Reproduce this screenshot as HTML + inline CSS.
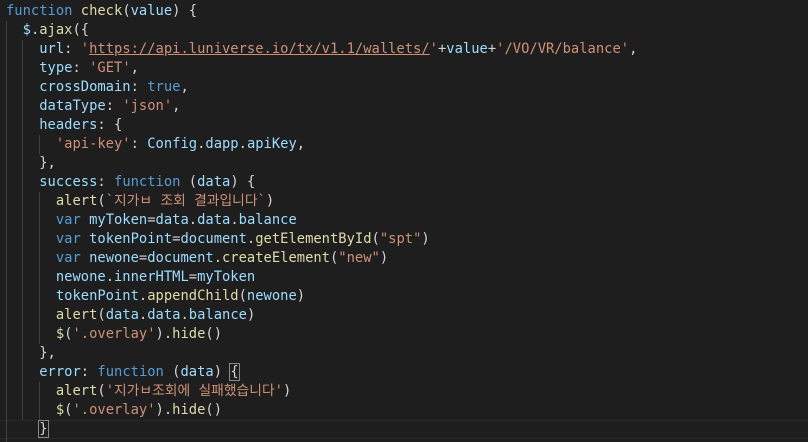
<!DOCTYPE html>
<html><head><meta charset="utf-8"><style>
body{margin:0;background:#1e1e1e;width:808px;height:440px;overflow:hidden}
pre{margin:0;position:absolute;left:6px;top:2px;font-family:"DejaVu Sans Mono","Noto Sans CJK KR",monospace;font-size:13.8px;line-height:19px;color:#d4d4d4}
.k{color:#569cd6}.f{color:#dcdcaa}.v{color:#9cdcfe}.s{color:#ce9178}.c{color:#4ec9b0}
.u{text-decoration:underline;text-decoration-color:#ce9178}
.g{position:absolute;width:1px;background:#404040}
.cur{position:absolute;left:0;top:420px;width:808px;height:19px;border-top:1px solid #282828;border-bottom:1px solid #282828;box-sizing:border-box}
.b{outline:1px solid #888;}
</style></head><body>
<div class="cur"></div>
<div class="g" style="left:6px;top:21px;height:421px"></div>
<div class="g" style="left:22px;top:40px;height:380px"></div>
<div class="g" style="left:39px;top:135px;height:19px"></div>
<div class="g" style="left:39px;top:192px;height:152px"></div>
<div class="g" style="left:39px;top:382px;height:38px"></div>
<pre><span class="k">function</span> <span class="f">check</span>(<span class="v">value</span>) {
  <span class="v">$</span>.<span class="f">ajax</span>({
    <span class="v">url</span>: <span class="s">'<span class="u">https://api.luniverse.io/tx/v1.1/wallets/</span>'</span>+<span class="v">value</span>+<span class="s">'/VO/VR/balance'</span>,
    <span class="v">type</span>: <span class="s">'GET'</span>,
    <span class="v">crossDomain</span>: <span class="k">true</span>,
    <span class="v">dataType</span>: <span class="s">'json'</span>,
    <span class="v">headers</span>: {
      <span class="s">'api-key'</span>: <span class="v">Config</span>.<span class="v">dapp</span>.<span class="v">apiKey</span>,
    },
    <span class="v">success</span>: <span class="k">function</span> (<span class="v">data</span>) {
      <span class="f">alert</span>(<span class="s">`지가ㅂ 조회 결과입니다`</span>)
      <span class="k">var</span> <span class="v">myToken</span>=<span class="v">data</span>.<span class="v">data</span>.<span class="v">balance</span>
      <span class="k">var</span> <span class="v">tokenPoint</span>=<span class="v">document</span>.<span class="f">getElementById</span>(<span class="s">"spt"</span>)
      <span class="k">var</span> <span class="v">newone</span>=<span class="v">document</span>.<span class="f">createElement</span>(<span class="s">"new"</span>)
      <span class="v">newone</span>.<span class="v">innerHTML</span>=<span class="v">myToken</span>
      <span class="v">tokenPoint</span>.<span class="f">appendChild</span>(<span class="v">newone</span>)
      <span class="f">alert</span>(<span class="v">data</span>.<span class="v">data</span>.<span class="v">balance</span>)
      <span class="f">$</span>(<span class="s">'.overlay'</span>).<span class="f">hide</span>()
    },
    <span class="v">error</span>: <span class="k">function</span> (<span class="v">data</span>) <span class="b">{</span>
      <span class="f">alert</span>(<span class="s">'지가ㅂ조회에 실패했습니다'</span>)
      <span class="f">$</span>(<span class="s">'.overlay'</span>).<span class="f">hide</span>()
    <span class="b">}</span></pre>
</body></html>
